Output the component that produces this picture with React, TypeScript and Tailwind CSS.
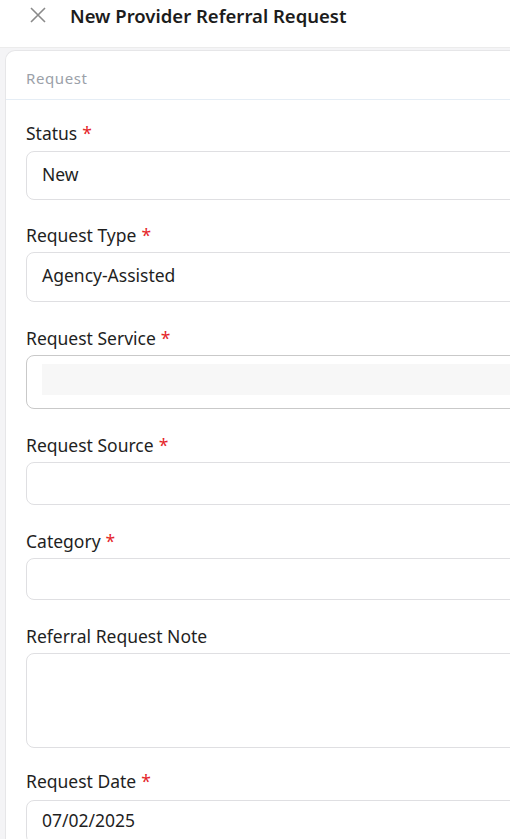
import React from 'react';

const font = { fontFamily: '"Noto Sans", "Open Sans", sans-serif' };

type FieldProps = {
  label: string;
  required?: boolean;
  value?: string;
  height: string;
  variant?: 'plain' | 'lookup';
  gap?: string;
};

const Field: React.FC<FieldProps> = ({ label, required, value, height, variant = 'plain', gap = 'mb-[6px]' }) => {
  return (
    <div>
      <div className={`text-[17.5px] leading-[24px] text-[#1f1f1f] ${gap}`}>
        {label}
        {required && <span className="text-[#e5252a] ml-[5px]">*</span>}
      </div>
      {variant === 'lookup' ? (
        <div className={`${height} w-[560px] rounded-[8px] border border-[#c9c9c9] bg-white pt-[8px] pl-[15px]`}>
          <div className="h-[31px] w-full bg-[#f7f7f7]"></div>
        </div>
      ) : (
        <div className={`${height} w-[560px] rounded-[8px] border border-[#dfdfe2] bg-white pl-[15px] pb-[3px] flex items-center text-[17.5px] text-[#1f1f1f]`}>
          {value}
        </div>
      )}
    </div>
  );
};

const App: React.FC = () => {
  return (
    <div className="w-[510px] h-[839px] overflow-hidden bg-[#f4f4f6]" style={font}>
      <div className="h-[48px] bg-white flex items-start pt-[4px] border-b border-[#ececec]">
        <svg className="ml-[30px] mt-[3px]" width="16" height="16" viewBox="0 0 16 16" fill="none" stroke="#8a8a8a" strokeWidth="1.6">
          <path d="M1 1L15 15M15 1L1 15" />
        </svg>
        <span className="ml-[24px] text-[18.5px] leading-[24px] font-semibold text-[#1c1c1c]">New Provider Referral Request</span>
      </div>
      <div className="mt-[2px] ml-[5px] w-[600px] bg-white rounded-tl-[10px] border-l border-t border-[#e6e6e8] min-h-[800px]">
        <div className="h-[49px] pt-[16px] pl-[20px] border-b border-[#e5edf5]">
          <span className="block text-[15px] leading-[22px] text-[#9ba1a9] tracking-[0.6px]">Request</span>
        </div>
        <div className="pl-[20px] pt-[21px] flex flex-col gap-[24px]">
          <div className="-mb-[1px]">
            <Field label="Status" required value="New" height="h-[49px]" />
          </div>
          <Field label="Request Type" required value="Agency-Assisted" height="h-[50px]" gap="mb-[5px]" />
          <Field label="Request Service" required height="h-[54px]" variant="lookup" gap="mb-[5px]" />
          <Field label="Request Source" required height="h-[43px]" gap="mb-[5px]" />
          <Field label="Category" required height="h-[42px]" gap="mb-[5px]" />
          <Field label="Referral Request Note" height="h-[95px]" gap="mb-[5px]" />
          <div className="-mt-[3px]">
            <Field label="Request Date" required value="07/02/2025" height="h-[44px]" gap="mb-[7px]" />
          </div>
        </div>
      </div>
    </div>
  );
};

export default App;
